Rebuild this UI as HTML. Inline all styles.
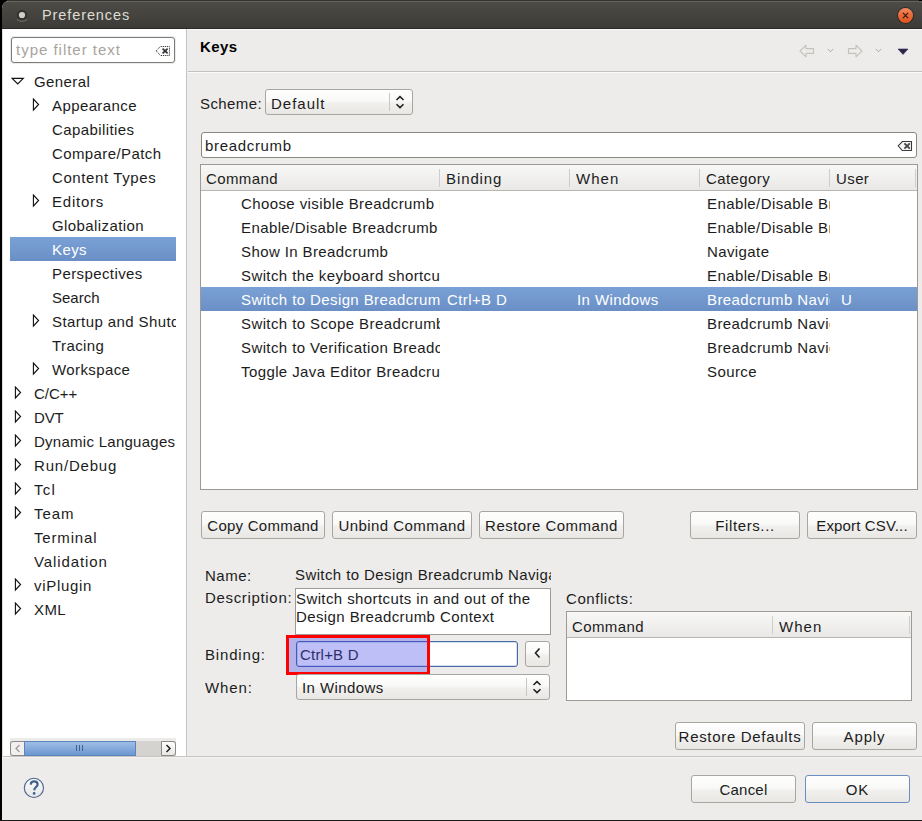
<!DOCTYPE html>
<html><head><meta charset="utf-8">
<style>
*{box-sizing:border-box;margin:0;padding:0}
html,body{width:922px;height:821px;overflow:hidden;background:#edeceb}
body{font-family:"Liberation Sans",sans-serif;font-size:15px;letter-spacing:0.4px;color:#1c1c1c;position:relative}
.a{position:absolute}
.t{position:absolute;white-space:nowrap;line-height:24px;height:24px;overflow:hidden}
.sel{background:linear-gradient(#7aa1d5,#6a8fc6)}
.btn{position:absolute;border:1px solid #a8a6a1;border-radius:3px;background:linear-gradient(#fefefe 0%,#f9f9f8 45%,#f1f0ee 55%,#e8e7e4 100%);text-align:center;line-height:27px;color:#1c1c1c;white-space:nowrap;letter-spacing:0.15px}
.field{position:absolute;background:#fff;border:1px solid #9a9893;border-radius:3px}
.hdr{position:absolute;background:linear-gradient(#f8f8f7,#e9e8e6);border-bottom:1px solid #b8b6b1}
.vsep{position:absolute;width:1px;background:#cfcdc9}
</style></head><body>
<!-- window frame -->
<div class="a" style="left:0;top:0;width:922px;height:821px;background:#000"></div>
<div class="a" style="left:2px;top:1px;width:920px;height:819px;background:#edeceb;border-radius:7px 2px 0 0;overflow:hidden">
</div>
<!-- title bar -->
<div class="a" style="left:2px;top:1px;width:920px;height:28px;border-radius:7px 2px 0 0;background:linear-gradient(#67645c 0,#67645c 1px,#4c4b46 1px,#3c3b37 27px,#2b2a27 27px)"></div>
<div class="a" style="left:7px;top:0;width:912px;height:1px;background:#35342f"></div>
<div class="a" style="left:187px;top:29px;width:735px;height:1px;background:#f7f7f6"></div>
<svg class="a" style="left:14px;top:7px" width="16" height="16"><path d="M2.8 12.5 Q8 16 13.2 12.5" fill="none" stroke="#77766f" stroke-width="1"/><circle cx="8" cy="8" r="5.3" fill="#353430"/><circle cx="8" cy="8" r="3.1" fill="#d2cfca"/></svg>
<div class="t" style="left:42px;top:3px;font-size:14.5px;letter-spacing:0.9px;color:#dfdbd2">Preferences</div>
<div class="a" style="left:898px;top:8px;width:15px;height:15px;border-radius:50%;background:linear-gradient(#f28a62,#e9683a 50%,#e0541c);box-shadow:0 0 0 1px rgba(30,28,25,0.55)"></div>
<svg class="a" style="left:898px;top:8px" width="15" height="15"><path d="M4.9 4.9 L10.1 10.1 M10.1 4.9 L4.9 10.1" stroke="#2a160c" stroke-width="1.1"/></svg>

<!-- left panel -->
<div class="a" style="left:2px;top:29px;width:185px;height:728px;background:#fff;border-right:1px solid #c6c4c0;border-bottom:1px solid #c6c4c0"></div>
<div class="a" style="left:2px;top:29px;width:1px;height:728px;background:#e0dfdc"></div>
<div class="field" style="left:11px;top:37px;width:164px;height:26px;border-color:#7e7c78;box-shadow:0 0 0 1px #ecebea"></div>
<div class="t" style="left:16px;top:38px;letter-spacing:0.98px;color:#a8a49e">type filter text</div>
<svg class="a" style="left:155px;top:45px" width="16" height="12"><path d="M1.2 5.8 L5.3 1.5 H14.5 V10.5 H5.3 Z" fill="#fafafa" stroke="#3a3a3a" stroke-width="1" stroke-dasharray="1.2 0.9"/><path d="M7.6 3.6 L12.6 8.4 M12.6 3.6 L7.6 8.4" stroke="#333" stroke-width="1.7"/></svg>
<div class="t" style="left:34px;top:70px;width:142px;">General</div>
<svg class="a" style="left:11px;top:77px" width="14" height="9"><path d="M1.2 1.3 H12.3 L6.75 6.9 Z" fill="none" stroke="#111" stroke-width="1.15" stroke-linejoin="miter"/></svg>
<div class="t" style="left:52px;top:94px;width:124px;">Appearance</div>
<svg class="a" style="left:32px;top:98px" width="9" height="14"><path d="M1.4 1 V12 L6.6 6.5 Z" fill="none" stroke="#111" stroke-width="1.1"/></svg>
<div class="t" style="left:52px;top:118px;width:124px;">Capabilities</div>
<div class="t" style="left:52px;top:142px;width:124px;">Compare/Patch</div>
<div class="t" style="left:52px;top:166px;width:124px;letter-spacing:0.6px;">Content Types</div>
<div class="t" style="left:52px;top:190px;width:124px;letter-spacing:0.77px;">Editors</div>
<svg class="a" style="left:32px;top:194px" width="9" height="14"><path d="M1.4 1 V12 L6.6 6.5 Z" fill="none" stroke="#111" stroke-width="1.1"/></svg>
<div class="t" style="left:52px;top:214px;width:124px;">Globalization</div>
<div class="a sel" style="left:10px;top:237px;width:166px;height:24px"></div>
<div class="t" style="left:52px;top:238px;color:#fff;width:124px;">Keys</div>
<div class="t" style="left:52px;top:262px;width:124px;">Perspectives</div>
<div class="t" style="left:52px;top:286px;width:124px;letter-spacing:0.0px;">Search</div>
<div class="t" style="left:52px;top:310px;width:124px;">Startup and Shutdown</div>
<svg class="a" style="left:32px;top:314px" width="9" height="14"><path d="M1.4 1 V12 L6.6 6.5 Z" fill="none" stroke="#111" stroke-width="1.1"/></svg>
<div class="t" style="left:52px;top:334px;width:124px;">Tracing</div>
<div class="t" style="left:52px;top:358px;width:124px;">Workspace</div>
<svg class="a" style="left:32px;top:362px" width="9" height="14"><path d="M1.4 1 V12 L6.6 6.5 Z" fill="none" stroke="#111" stroke-width="1.1"/></svg>
<div class="t" style="left:34px;top:382px;width:142px;letter-spacing:0.0px;">C/C++</div>
<svg class="a" style="left:14px;top:386px" width="9" height="14"><path d="M1.4 1 V12 L6.6 6.5 Z" fill="none" stroke="#111" stroke-width="1.1"/></svg>
<div class="t" style="left:34px;top:406px;width:142px;letter-spacing:-0.2px;">DVT</div>
<svg class="a" style="left:14px;top:410px" width="9" height="14"><path d="M1.4 1 V12 L6.6 6.5 Z" fill="none" stroke="#111" stroke-width="1.1"/></svg>
<div class="t" style="left:34px;top:430px;width:142px;letter-spacing:0.27px;">Dynamic Languages</div>
<svg class="a" style="left:14px;top:434px" width="9" height="14"><path d="M1.4 1 V12 L6.6 6.5 Z" fill="none" stroke="#111" stroke-width="1.1"/></svg>
<div class="t" style="left:34px;top:454px;width:142px;letter-spacing:0.8px;">Run/Debug</div>
<svg class="a" style="left:14px;top:458px" width="9" height="14"><path d="M1.4 1 V12 L6.6 6.5 Z" fill="none" stroke="#111" stroke-width="1.1"/></svg>
<div class="t" style="left:34px;top:478px;width:142px;letter-spacing:1.3px;">Tcl</div>
<svg class="a" style="left:14px;top:482px" width="9" height="14"><path d="M1.4 1 V12 L6.6 6.5 Z" fill="none" stroke="#111" stroke-width="1.1"/></svg>
<div class="t" style="left:34px;top:502px;width:142px;letter-spacing:0.9px;">Team</div>
<svg class="a" style="left:14px;top:506px" width="9" height="14"><path d="M1.4 1 V12 L6.6 6.5 Z" fill="none" stroke="#111" stroke-width="1.1"/></svg>
<div class="t" style="left:34px;top:526px;width:142px;letter-spacing:0.83px;">Terminal</div>
<div class="t" style="left:34px;top:550px;width:142px;letter-spacing:0.9px;">Validation</div>
<div class="t" style="left:34px;top:574px;width:142px;letter-spacing:0.7px;">viPlugin</div>
<svg class="a" style="left:14px;top:578px" width="9" height="14"><path d="M1.4 1 V12 L6.6 6.5 Z" fill="none" stroke="#111" stroke-width="1.1"/></svg>
<div class="t" style="left:34px;top:598px;width:142px;">XML</div>
<svg class="a" style="left:14px;top:602px" width="9" height="14"><path d="M1.4 1 V12 L6.6 6.5 Z" fill="none" stroke="#111" stroke-width="1.1"/></svg>

<!-- left h scrollbar -->
<div class="a" style="left:10px;top:738px;width:166px;height:18px;background:linear-gradient(#ecebea 0,#ecebea 3px,#d4d3d0 3px)"></div>
<div class="a" style="left:10px;top:741px;width:15px;height:15px;border:1px solid #8d8b87;border-radius:3px 0 0 3px;background:#f1f0ee"></div>
<svg class="a" style="left:13px;top:743px" width="10" height="11"><path d="M6.5 2 L3 5.5 L6.5 9" fill="none" stroke="#9c9a96" stroke-width="1.2"/></svg>
<div class="a" style="left:24px;top:741px;width:112px;height:15px;background:linear-gradient(#9fbee6,#6b96d0);border:1px solid #5d85bd"></div>
<div class="a" style="left:76px;top:745px;width:1px;height:6px;background:#3f5f8c;box-shadow:3px 0 0 #3f5f8c,6px 0 0 #3f5f8c"></div>
<div class="a" style="left:161px;top:741px;width:15px;height:15px;border:1px solid #8d8b87;border-radius:0 3px 3px 0;background:linear-gradient(#fdfdfd,#e9e8e6)"></div>
<svg class="a" style="left:163px;top:743px" width="10" height="11"><path d="M3.5 2 L7 5.5 L3.5 9" fill="none" stroke="#222" stroke-width="1.5"/></svg>

<!-- right header -->
<div class="t" style="left:200px;top:35px;font-weight:bold;color:#000">Keys</div>
<div class="a" style="left:188px;top:71px;width:734px;height:1px;background:#c3c1bd"></div>
<div class="a" style="left:188px;top:72px;width:734px;height:1px;background:#fbfbfa"></div>
<!-- toolbar -->
<svg class="a" style="left:799px;top:44px" width="16" height="14"><path d="M1 7 L7 1.2 V4.6 H14.5 V9.4 H7 V12.8 Z" fill="none" stroke="#c4c2be" stroke-width="1.1" stroke-linejoin="round"/></svg>
<svg class="a" style="left:827px;top:48px" width="7" height="5"><path d="M0.8 1 L3.5 3.7 L6.2 1" fill="none" stroke="#a9a7a3" stroke-width="1"/></svg>
<svg class="a" style="left:847px;top:44px" width="16" height="14"><path d="M15 7 L9 1.2 V4.6 H1.5 V9.4 H9 V12.8 Z" fill="none" stroke="#c4c2be" stroke-width="1.1" stroke-linejoin="round"/></svg>
<svg class="a" style="left:875px;top:48px" width="7" height="5"><path d="M0.8 1 L3.5 3.7 L6.2 1" fill="none" stroke="#a9a7a3" stroke-width="1"/></svg>
<svg class="a" style="left:897px;top:48px" width="12" height="8"><path d="M1 1 H11 L6 6.5 Z" fill="#2e2640" stroke="#3b2a6a" stroke-width="0.6"/></svg>

<!-- scheme -->
<div class="t" style="left:200px;top:92px">Scheme:</div>
<div class="btn" style="left:265px;top:89px;width:148px;height:26px;text-align:left;padding-left:5px;line-height:24px"></div>
<div class="t" style="left:271px;top:92px;letter-spacing:1px">Default</div>
<div class="a" style="left:389px;top:93px;width:1px;height:18px;background:#c9c7c3"></div>
<svg class="a" style="left:394px;top:93px" width="12" height="18"><path d="M2.5 7 L6 3.6 L9.5 7 M2.5 11.2 L6 14.6 L9.5 11.2" fill="none" stroke="#1e1e1e" stroke-width="1.5"/></svg>

<!-- filter field -->
<div class="field" style="left:201px;top:132px;width:716px;height:26px;border-color:#8a8884"></div>
<div class="t" style="left:205px;top:134px;letter-spacing:0.67px">breadcrumb</div>
<svg class="a" style="left:897px;top:140px" width="16" height="12"><path d="M1.2 5.8 L5.3 1.5 H14.5 V10.5 H5.3 Z" fill="#f7f7f7" stroke="#3a3a3a" stroke-width="1.1"/><path d="M7.4 3.4 L12.8 8.6 M12.8 3.4 L7.4 8.6" stroke="#4a4a4a" stroke-width="2"/></svg>

<!-- table -->
<div class="a" style="left:200px;top:164px;width:718px;height:326px;background:#fff;border:1px solid #9d9994"></div>
<div class="hdr" style="left:201px;top:165px;width:716px;height:26px"></div>
<div class="vsep" style="left:439px;top:169px;height:18px"></div>
<div class="vsep" style="left:569px;top:169px;height:18px"></div>
<div class="vsep" style="left:699px;top:169px;height:18px"></div>
<div class="vsep" style="left:829px;top:169px;height:18px"></div>
<div class="vsep" style="left:915px;top:169px;height:18px"></div>
<div class="t" style="left:206px;top:167px">Command</div>
<div class="t" style="left:446px;top:167px;letter-spacing:0.9px">Binding</div>
<div class="t" style="left:576px;top:167px;letter-spacing:1.05px">When</div>
<div class="t" style="left:706px;top:167px">Category</div>
<div class="t" style="left:836px;top:167px">User</div>
<div class="t" style="left:241px;top:192px;width:199px;">Choose visible Breadcrumb Navigation</div>
<div class="t" style="left:707px;top:192px;width:123px;">Enable/Disable Breadcrumb</div>
<div class="t" style="left:241px;top:216px;width:199px;">Enable/Disable Breadcrumb</div>
<div class="t" style="left:707px;top:216px;width:123px;">Enable/Disable Breadcrumb</div>
<div class="t" style="left:241px;top:240px;width:199px;">Show In Breadcrumb</div>
<div class="t" style="left:707px;top:240px;width:123px;">Navigate</div>
<div class="t" style="left:241px;top:264px;width:199px;">Switch the keyboard shortcuts</div>
<div class="t" style="left:707px;top:264px;width:123px;">Enable/Disable Breadcrumb</div>
<div class="a sel" style="left:201px;top:287px;width:716px;height:24px"></div>
<div class="t" style="left:241px;top:288px;color:#fff;width:199px;">Switch to Design Breadcrumb Navigation</div>
<div class="t" style="left:447px;top:288px;color:#fff;width:123px;">Ctrl+B D</div>
<div class="t" style="left:577px;top:288px;color:#fff;width:123px;">In Windows</div>
<div class="t" style="left:707px;top:288px;color:#fff;width:123px;">Breadcrumb Navigation</div>
<div class="t" style="left:841px;top:288px;color:#fff;width:75px;">U</div>
<div class="t" style="left:241px;top:312px;width:199px;">Switch to Scope Breadcrumb</div>
<div class="t" style="left:707px;top:312px;width:123px;">Breadcrumb Navigation</div>
<div class="t" style="left:241px;top:336px;width:199px;">Switch to Verification Breadcrumb</div>
<div class="t" style="left:707px;top:336px;width:123px;">Breadcrumb Navigation</div>
<div class="t" style="left:241px;top:360px;width:199px;">Toggle Java Editor Breadcrumb</div>
<div class="t" style="left:707px;top:360px;width:123px;">Source</div>


<!-- buttons -->
<div class="btn" style="left:201px;top:511px;width:124px;height:28px;letter-spacing:0.25px">Copy Command</div>
<div class="btn" style="left:332px;top:511px;width:140px;height:28px;letter-spacing:0.45px">Unbind Command</div>
<div class="btn" style="left:479px;top:511px;width:145px;height:28px;letter-spacing:0.46px">Restore Command</div>
<div class="btn" style="left:690px;top:511px;width:110px;height:28px;letter-spacing:0.6px">Filters...</div>
<div class="btn" style="left:807px;top:511px;width:110px;height:28px;letter-spacing:0.15px">Export CSV...</div>

<!-- details -->
<div class="t" style="left:205px;top:564px;letter-spacing:0.5px">Name:</div>
<div class="t" style="left:295px;top:563px;width:256px">Switch to Design Breadcrumb Navigation</div>
<div class="t" style="left:205px;top:586px;letter-spacing:0.67px">Description:</div>
<div class="a" style="left:295px;top:588px;width:256px;height:47px;background:#fff;border:1px solid #9d9994"></div>
<div class="a" style="left:296px;top:590px;width:254px;line-height:18px;white-space:normal">Switch shortcuts in and out of the Design Breadcrumb Context</div>
<div class="t" style="left:566px;top:587px;letter-spacing:0.57px">Conflicts:</div>
<div class="a" style="left:566px;top:611px;width:346px;height:90px;background:#fff;border:1px solid #9d9994"></div>
<div class="hdr" style="left:567px;top:612px;width:344px;height:26px"></div>
<div class="vsep" style="left:772px;top:616px;height:18px"></div>
<div class="vsep" style="left:909px;top:616px;height:18px"></div>
<div class="t" style="left:572px;top:615px">Command</div>
<div class="t" style="left:779px;top:615px;letter-spacing:1.05px">When</div>

<div class="t" style="left:205px;top:643px;letter-spacing:0.83px">Binding:</div>
<div class="field" style="left:296px;top:641px;width:222px;height:26px;border-color:#4a6aa8;box-shadow:inset 0 0 0 1px #d6e0f0"></div>
<div class="t" style="left:300px;top:643px;letter-spacing:0.2px;color:#262626">Ctrl+B D</div>
<div class="a" style="left:286px;top:635px;width:144px;height:40px;border:3px solid #ff0000;background:rgba(60,60,230,0.33)"></div>
<div class="btn" style="left:525px;top:641px;width:25px;height:26px"></div>
<svg class="a" style="left:532px;top:646px" width="12" height="14"><path d="M7.5 2.5 L3.5 7 L7.5 11.5" fill="none" stroke="#222" stroke-width="1.6"/></svg>

<div class="t" style="left:205px;top:676px;letter-spacing:0.9px">When:</div>
<div class="btn" style="left:296px;top:674px;width:254px;height:26px"></div>
<div class="t" style="left:302px;top:676px">In Windows</div>
<div class="a" style="left:526px;top:678px;width:1px;height:18px;background:#c9c7c3"></div>
<svg class="a" style="left:531px;top:678px" width="12" height="18"><path d="M2.5 7 L6 3.6 L9.5 7 M2.5 11.2 L6 14.6 L9.5 11.2" fill="none" stroke="#1e1e1e" stroke-width="1.5"/></svg>

<div class="btn" style="left:675px;top:722px;width:130px;height:28px;letter-spacing:0.69px">Restore Defaults</div>
<div class="btn" style="left:812px;top:722px;width:105px;height:28px;letter-spacing:0.85px">Apply</div>

<!-- bottom -->
<div class="a" style="left:187px;top:756px;width:735px;height:1px;background:#c6c4c0"></div>
<div class="a" style="left:2px;top:757px;width:920px;height:1px;background:#f4f3f2"></div>
<svg class="a" style="left:22px;top:776px" width="24" height="24"><defs><linearGradient id="hg" x1="0" y1="0" x2="0" y2="1"><stop offset="0" stop-color="#fbfbfb"/><stop offset="1" stop-color="#e6e6e6"/></linearGradient></defs><circle cx="11.9" cy="11.9" r="9.6" fill="url(#hg)" stroke="#4a6590" stroke-width="1.1"/><path d="M8.7 8.6 C8.9 6.2 10.5 5.4 12.1 5.4 C14.2 5.4 15.6 6.6 15.6 8.4 C15.6 10.6 12.6 11.2 12.4 13.4 V14.2" fill="none" stroke="#42608e" stroke-width="2.2" stroke-linecap="butt"/><circle cx="12.1" cy="17.4" r="1.35" fill="#42608e"/></svg>
<div class="btn" style="left:691px;top:775px;width:105px;height:28px;letter-spacing:0.2px">Cancel</div>
<div class="btn" style="left:805px;top:775px;width:105px;height:28px;border-color:#6a8ec0;letter-spacing:1px">OK</div>
<div class="a" style="left:0;top:820px;width:922px;height:1px;background:#1a1a1a"></div>
</body></html>
